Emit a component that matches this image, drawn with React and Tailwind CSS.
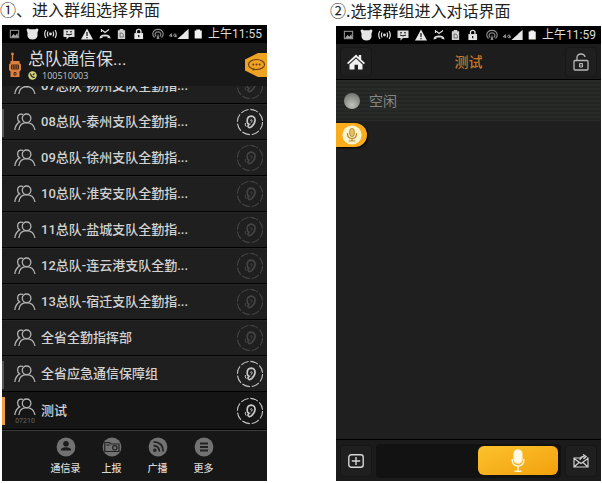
import React from 'react';

const StatusIcon = ({ children, className = 'w-[11px]' }) => (
  <svg viewBox="0 0 12 12" className={`h-3 ${className}`} fill="none" stroke="#dcdcdc" strokeWidth="1.2" aria-hidden="true">
    {children}
  </svg>
);

function StatusBar({ time }) {
  return (
    <div className="flex h-[18px] items-center bg-black pr-[5px] pl-[7px] text-[#dcdcdc]">
      <div className="flex w-[135px] items-center justify-between">
        <StatusIcon>
          <rect x="1.5" y="2" width="9" height="8" stroke="#909090" />
          <path d="M2 9.5 L5 6 L7 8 L9 5 L10 9.5Z" fill="#a8a8a8" stroke="none" />
        </StatusIcon>
        <StatusIcon className="w-[13px]">
          <path d="M0 1.5 Q1.5 -0.2 3 1.2 H9 Q10.5 -0.2 12 1.5 L11 4.5 V8 Q10 11.5 6 11.5 Q2 11.5 1 8 V4.5Z" fill="#e6e6e6" stroke="none" />
        </StatusIcon>
        <StatusIcon className="w-[13px]">
          <circle cx="6" cy="6" r="1.4" fill="#dcdcdc" stroke="none" />
          <path d="M3.6 3.5 Q2.2 6 3.6 8.5 M8.4 3.5 Q9.8 6 8.4 8.5 M1.4 2 Q-1 6 1.4 10 M10.6 2 Q13 6 10.6 10" />
        </StatusIcon>
        <StatusIcon className="w-3">
          <path d="M0.5 1.5 H11.5 V9 H6 L3.5 11.5 V9 H0.5Z" fill="#dcdcdc" stroke="none" />
          <path d="M3 3.8 H5 M7 3.8 H9 M3 6 Q6 7.8 9 6" stroke="#111" strokeWidth="1" />
        </StatusIcon>
        <StatusIcon className="w-3">
          <path d="M6 0.5 L12 11.5 H0Z" fill="#e6e6e6" stroke="none" />
          <path d="M6 4 V8 M6 9 V10.2" stroke="#111" />
        </StatusIcon>
        <StatusIcon className="w-3">
          <path d="M2.5 1.5 L6 4.5 L10 1.5 M2.5 1 V4" />
          <path d="M0.5 10.5 Q0.5 6.5 6 6.5 Q11.5 6.5 11.5 10.5 L8.5 9.8 V8.4 H3.5 V9.8Z" fill="#dcdcdc" stroke="none" />
        </StatusIcon>
        <StatusIcon>
          <path d="M4 0.5 H8 V1.8 H10 V11.5 H2 V1.8 H4Z" fill="#d0d0d0" stroke="none" />
          <path d="M4.4 5 H6.6 L8 6.6 V9.3 H4.4Z" stroke="#555" strokeWidth="0.8" />
        </StatusIcon>
        <StatusIcon>
          <rect x="1.5" y="5" width="9.5" height="6.5" fill="#e6e6e6" stroke="none" />
          <path d="M3.8 5.5 V3 Q3.8 1 6.2 1 Q8.7 1 8.7 3 V5.5" strokeWidth="1.5" />
          <path d="M6.2 7 V9.5" stroke="#111" strokeWidth="1.4" />
        </StatusIcon>
      </div>
      <div className="ml-2 flex items-center">
        <StatusIcon className="w-3">
          <path d="M2.5 9.5 Q0.5 7.5 0.8 5.5 Q1.5 1.3 6 1.3 Q10.5 1.3 11.2 5.5 Q11.5 7.5 9.5 9.5 M4.2 8.5 Q2.8 7 3.2 5.6 Q3.8 3.8 6 3.8 Q8.2 3.8 8.8 5.6 Q9.2 7 7.8 8.5" stroke="#8a8a8a" />
          <path d="M6 5.5 L7.5 11 H4.5Z" fill="#8a8a8a" stroke="none" />
        </StatusIcon>
        <StatusIcon className="ml-[5px] w-2">
          <path d="M3.5 10.5 V5.5 L0.5 9 H5 M11 6.5 Q7 5 7 8 Q7 10.8 11 10 V8.3 H9" stroke="#bdbdbd" />
        </StatusIcon>
        <StatusIcon className="w-3">
          <path d="M11.5 1 V11 H0.5Z" fill="#777" stroke="none" />
          <path d="M8.5 4 V11 H0.5Z M11.5 1 V11 H7 V5Z" fill="#e6e6e6" stroke="none" />
        </StatusIcon>
        <StatusIcon className="ml-1 w-[10px]">
          <path d="M4 0.5 H8.5 V1.8 H10.5 V11.5 H2 V1.8 H4Z" fill="#f2f2f2" stroke="none" />
        </StatusIcon>
      </div>
      <span className="ml-auto text-xs leading-none">{time}</span>
    </div>
  );
}

const PeopleIcon = () => (
  <svg viewBox="0 0 22 18" className="h-[18px] w-[22px] shrink-0" fill="none" stroke="#b4b4b4" strokeWidth="1.3" aria-hidden="true">
    <circle cx="12.6" cy="5.3" r="4.3" />
    <path d="M4.8 17 Q5.6 9.8 12.6 9.7 Q19.6 9.8 21 17" />
    <path d="M9 1.4 Q3.8 0 3.6 5 Q3.7 7.8 5.6 8.9 Q1.6 11 0.8 17" />
  </svg>
);

const EarIcon = ({ active }) => (
  <svg viewBox="0 0 28 28" className="h-7 w-7" fill="none" stroke={active ? '#c8c8c8' : '#444'} aria-hidden="true">
    <circle cx="14" cy="14" r="12.6" strokeWidth="1.1" strokeDasharray="8 1.9" />
    <path d="M11.2 13.5 Q11 8.5 15.2 8.2 Q19.4 8.4 19 12.8 Q18.6 15.8 16.2 18 Q14 20.6 12.4 19 Q11.4 17.8 13 16.4 Q11.2 15.8 11.2 13.5Z" strokeWidth="1.7" />
    <path d="M14.2 12.5 Q15.8 10.6 16.2 12.8 Q16 14.2 14.6 15 M9.4 15 Q8.8 17 10.2 18.6" strokeWidth="1" />
  </svg>
);

function GroupRow({ name, active, selected }) {
  return (
    <li
      className={`relative flex shrink-0 items-center border-b border-black pr-[3px] pl-3 ${
        selected ? 'h-[38px] bg-[#151515]' : 'h-9 border-t border-t-[#252525] bg-[#1f1f1f]'
      }`}
    >
      {active && !selected && <span className="absolute top-1 left-0 h-7 w-[2px] bg-[#555]" />}
      {selected && <span className="absolute top-[5px] left-0 h-7 w-[3px] bg-[#f0a040]" />}
      <span className="flex w-[22px] flex-col items-center">
        <PeopleIcon />
        {selected && <span className="mt-[2px] text-[7px] leading-[6px] text-[#666]">07210</span>}
      </span>
      <span className="ml-[5px] flex-1 truncate text-[13px] font-medium text-[#d2d2d2]">{name}</span>
      <button type="button" aria-label={`监听 ${name}`} className="shrink-0">
        <EarIcon active={active || selected} />
      </button>
    </li>
  );
}

const groups = [
  { name: '08总队-泰州支队全勤指...', active: true },
  { name: '09总队-徐州支队全勤指...' },
  { name: '10总队-淮安支队全勤指...' },
  { name: '11总队-盐城支队全勤指...' },
  { name: '12总队-连云港支队全勤...' },
  { name: '13总队-宿迁支队全勤指...' },
  { name: '全省全勤指挥部' },
  { name: '全省应急通信保障组', active: true },
  { name: '测试', selected: true },
];

const tabs = [
  {
    label: '通信录',
    icon: (
      <g fill="#1c1c1c">
        <circle cx="10" cy="6.8" r="2.8" />
        <path d="M4.8 13.5 Q5 10.2 10 10.2 Q15 10.2 15.2 13.5Z" />
      </g>
    ),
  },
  {
    label: '上报',
    icon: (
      <g fill="none" stroke="#222" strokeWidth="1.2">
        <path d="M2.8 14.5 V5.5 H7.5 L8.8 7 H17 V14.5Z" />
        <circle cx="12.8" cy="10.8" r="2.2" />
        <path d="M4.5 8 H7.5" />
      </g>
    ),
  },
  {
    label: '广播',
    icon: (
      <g fill="none" stroke="#222" strokeWidth="1.7">
        <path d="M5.5 4.8 Q15 5 15.2 14.5 M5.5 8.6 Q11 8.8 11.4 14.5" />
        <circle cx="6.8" cy="13.2" r="0.9" fill="#222" />
      </g>
    ),
  },
  {
    label: '更多',
    icon: <path d="M6 6.5 H14 M6 10 H14 M6 13.5 H14" stroke="#222" strokeWidth="1.8" />,
  },
];

function GroupScreen() {
  return (
    <div className="overflow-hidden bg-[#181818] font-[Roboto,'Noto_Sans_CJK_SC',sans-serif]">
      <StatusBar time="上午11:55" />
      <header className="flex h-[43px] items-center bg-[#181818] pl-[6px]">
        <svg viewBox="0 0 14 26" className="h-[26px] w-[14px] shrink-0" fill="none" stroke="#dc8040" aria-hidden="true">
          <path d="M4.5 2 V10" strokeWidth="1.4" />
          <circle cx="4.5" cy="2" r="1.4" fill="#dc8040" stroke="none" />
          <path d="M2.5 9 H11.5 V11 L13 12.5 V18 L11.5 19.5 V25 H2.5 V19.5 L1 18 V12.5 L2.5 11Z" fill="#dc8040" stroke="none" />
          <path d="M3.5 13 H10.5 V17 H3.5Z M3.5 15 H10.5 M5.8 13 V17 M8.2 13 V17 M6 20.5 H8 V23 H6Z" stroke="#3a2010" strokeWidth="0.9" />
        </svg>
        <div className="ml-[6px] flex-1">
          <h2 className="text-[17px] leading-[22px] text-[#dedede]">总队通信保...</h2>
          <p className="flex items-center gap-[5px] font-['Open_Sans',sans-serif] text-[9px] leading-3 text-[#c4c4c4]">
            <svg viewBox="0 0 9 9" className="h-[9px] w-[9px]" aria-hidden="true">
              <circle cx="4.5" cy="4.5" r="4.2" fill="#d6d678" />
              <path d="M2.3 2.3 Q2.8 5.8 6.7 6.5 M4.8 4 L6.5 2.5" fill="none" stroke="#333" strokeWidth="1.3" />
            </svg>
            100510003
          </p>
        </div>
        <button type="button" aria-label="消息" className="shrink-0">
          <svg viewBox="0 0 22 24" className="h-6 w-[22px]" aria-hidden="true">
            <path d="M0 6.5 L13 0 H22 V24 H13 L0 17.5Z" fill="#efa324" />
            <ellipse cx="11.5" cy="11.5" rx="8" ry="5" fill="none" stroke="#6a3c10" strokeWidth="1.1" />
            <path d="M8 15.5 L7.5 18 L10.5 16.2" fill="#6a3c10" />
            <g fill="#6a3c10">
              <circle cx="8.3" cy="11.5" r="1" />
              <circle cx="11.5" cy="11.5" r="1" />
              <circle cx="14.7" cy="11.5" r="1" />
            </g>
          </svg>
        </button>
      </header>
      <ul className="flex h-[18px] flex-col justify-end overflow-hidden">
        <GroupRow name="07总队-扬州支队全勤指..." />
      </ul>
      <ul>
        {groups.map((g) => (
          <GroupRow key={g.name} {...g} />
        ))}
      </ul>
      <nav className="flex h-[51px] justify-center border-t border-[#3c3c3c] bg-[#171717] pt-[6px]">
        {tabs.map((t) => (
          <button key={t.label} type="button" className="flex w-[46px] flex-col items-center text-[10px] leading-3 font-medium text-[#d8d8d8]">
            <svg viewBox="0 0 20 20" className="mb-[6px] h-5 w-5" aria-hidden="true">
              <circle cx="10" cy="10" r="9.4" fill="#727272" />
              {t.icon}
            </svg>
            {t.label}
          </button>
        ))}
      </nav>
    </div>
  );
}

function TalkScreen() {
  return (
    <div className="overflow-hidden bg-[#1f1f1f] font-[Roboto,'Noto_Sans_CJK_SC',sans-serif]">
      <StatusBar time="上午11:59" />
      <header className="flex h-9 items-center justify-between border-b border-black bg-[#1d1d1d] px-1">
        <button type="button" aria-label="主页" className="flex h-[30px] w-8 items-center justify-center rounded border border-[#171717] bg-[#1f1f1f]">
          <svg viewBox="0 0 18 16" className="h-4 w-[18px]" fill="#f0f0f0" aria-hidden="true">
            <path d="M9 0.5 L11.8 3.2 V1 H14.2 V5.4 L18 9 L16.8 10.2 L9 3.2 L1.2 10.2 L0 9Z" />
            <path d="M9 4.6 L15.5 10.4 V15.5 H11 V10.8 H7.5 V15.5 H2.5 V10.4Z" />
          </svg>
        </button>
        <h2 className="text-sm leading-none font-medium text-[#c4762e]">测试</h2>
        <button type="button" aria-label="锁定" className="flex h-[30px] w-8 items-center justify-center rounded border border-[#171717] bg-[#1f1f1f]">
          <svg viewBox="0 0 16 18" className="h-[18px] w-4" fill="none" stroke="#b8b8b8" strokeWidth="1.3" aria-hidden="true">
            <rect x="1" y="7.5" width="14" height="9.5" rx="1" />
            <path d="M4 7.5 V4.5 Q4 1 8 1 Q11.5 1 12 4" />
            <path d="M6.5 10.5 H9.5 V14 H6.5Z M8 11.5 V13.5" strokeWidth="1" />
          </svg>
        </button>
      </header>
      <div className="flex h-[41px] items-center gap-[9px] bg-[repeating-linear-gradient(#292b28_0_2px,#242623_2px_4px)] pl-2">
        <span className="h-4 w-4 rounded-full bg-[radial-gradient(circle_at_50%_75%,#c4c4be,#8e8e8a_55%,#60605c)]" />
        <span className="text-sm text-[#868686]">空闲</span>
      </div>
      <div className="h-[318px] bg-[#1f1f1f] pt-[2px]">
        <button type="button" aria-label="语音" className="flex h-6 w-[31px] items-center justify-center rounded-r-full bg-[#f9ac1c] shadow-[1px_1px_2px_#000]">
          <svg viewBox="0 0 20 20" className="h-5 w-5" fill="none" stroke="#b88a28" aria-hidden="true">
            <circle cx="10" cy="10" r="9.6" fill="#fcf3d0" stroke="none" />
            <rect x="7.8" y="3.5" width="4.4" height="8" rx="2.2" fill="#e8c468" />
            <path d="M5.5 8 Q5.2 13.5 10 13.5 Q14.8 13.5 14.5 8 M10 13.5 V16 M6.5 16 H13.5" strokeWidth="1.2" />
          </svg>
        </button>
      </div>
      <footer className="flex h-[42px] items-center border-t border-black bg-[#1b1b1b] px-1">
        <button type="button" aria-label="添加" className="flex h-8 w-8 shrink-0 items-center justify-center rounded border border-[#161616] bg-[#1f1f1f]">
          <svg viewBox="0 0 16 14" className="h-[14px] w-4" fill="none" stroke="#d8d8d8" strokeWidth="1.4" aria-hidden="true">
            <rect x="0.8" y="0.8" width="14.4" height="12.4" rx="2.5" />
            <path d="M8 3 V11 M3.8 7 H12.2" />
          </svg>
        </button>
        <div className="ml-1 flex h-[34px] flex-1 items-center justify-end rounded bg-[#121212] pr-[3px]">
          <button type="button" aria-label="按住说话" className="flex h-[29px] w-20 items-center justify-center rounded-md bg-linear-to-br from-[#fcc22c] to-[#f2a008]">
            <svg viewBox="0 0 14 24" className="h-6 w-[14px]" fill="none" stroke="#fff6d8" strokeWidth="1.5" aria-hidden="true">
              <rect x="3.2" y="1" width="7.6" height="13" rx="3.8" fill="#fffbea" />
              <path d="M1.2 10 Q1 17 7 17 Q13 17 12.8 10 M7 17 V22 M3.5 22.3 H10.5" />
            </svg>
          </button>
        </div>
        <button type="button" aria-label="发送消息" className="ml-1 flex h-8 w-8 shrink-0 items-center justify-center rounded border border-[#161616] bg-[#1f1f1f]">
          <svg viewBox="0 0 16 14" className="h-[14px] w-4" fill="none" stroke="#d0d0d0" strokeWidth="1.2" aria-hidden="true">
            <path d="M9 4 H1 V13 H15 V4 H14 M1 4.5 L8 9.5 L15 4.5 M1 13 L6 8.5 M15 13 L10 8.5" />
            <path d="M7 6 Q7.5 2.5 11 2.5 M10 0.5 L13 2.6 L10.5 5" strokeWidth="1.4" />
          </svg>
        </button>
      </footer>
    </div>
  );
}

export default function App() {
  return (
    <main className="grid grid-cols-2 gap-[69px] bg-white pr-px pb-[2px] pl-[2px] font-['Noto_Sans_CJK_SC',sans-serif]">
      <section>
        <h1 className="-ml-[2px] h-[25px] text-base leading-[18px] whitespace-nowrap text-[#222]">①、进入群组选择界面</h1>
        <GroupScreen />
      </section>
      <section className="pt-px">
        <h1 className="-ml-[6px] h-[25px] text-base leading-[18px] whitespace-nowrap text-[#222]">②.选择群组进入对话界面</h1>
        <TalkScreen />
      </section>
    </main>
  );
}
